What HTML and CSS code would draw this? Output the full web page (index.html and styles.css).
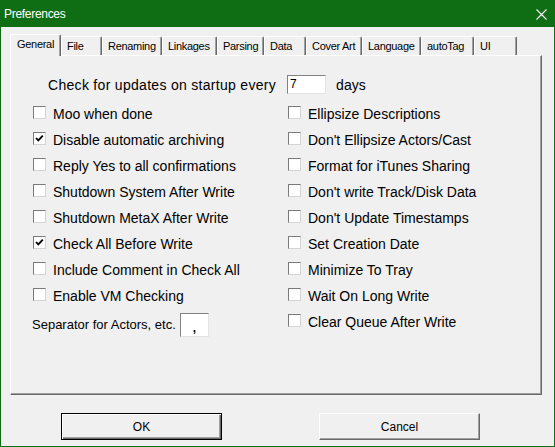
FILE: index.html
```html
<!DOCTYPE html>
<html lang="en">
<head>
    <meta charset="UTF-8">
    <title>Preferences</title>
    <link rel="stylesheet" href="styles.css">
</head>
<body>
    <div class="window">
        <!-- Title Bar -->
        <div class="titlebar">
            <span class="title">Preferences</span>
            <svg class="close" width="11" height="11" viewBox="0 0 11 11">
                <path d="M0.5 0.5 L10.5 10.5 M10.5 0.5 L0.5 10.5" stroke="#fff" stroke-width="1.1" fill="none"/>
            </svg>
        </div>

        <div class="client">
            <!-- Tabs -->
            <div class="tabs">
                <div class="tab selected w-general">General</div>
                <div class="tab w-file">File</div>
                <div class="tab w-renaming">Renaming</div>
                <div class="tab w-linkages">Linkages</div>
                <div class="tab w-parsing">Parsing</div>
                <div class="tab w-data">Data</div>
                <div class="tab w-cover">Cover Art</div>
                <div class="tab w-language">Language</div>
                <div class="tab w-autotag">autoTag</div>
                <div class="tab w-ui">UI</div>
            </div>

            <!-- General Panel -->
            <div class="panel">
                <div class="update-row">
                    <span class="update-label">Check for updates on startup every</span>
                    <span class="textbox days-box">7</span>
                    <span>days</span>
                </div>

                <div class="columns">
                    <div class="column">
                        <label class="check"><span class="box"></span>Moo when done</label>
                        <label class="check"><span class="box checked"></span>Disable automatic archiving</label>
                        <label class="check"><span class="box"></span>Reply Yes to all confirmations</label>
                        <label class="check"><span class="box"></span>Shutdown System After Write</label>
                        <label class="check"><span class="box"></span>Shutdown MetaX After Write</label>
                        <label class="check"><span class="box checked"></span>Check All Before Write</label>
                        <label class="check"><span class="box"></span>Include Comment in Check All</label>
                        <label class="check"><span class="box"></span>Enable VM Checking</label>
                        <div class="separator-row">
                            <span>Separator for Actors, etc.</span>
                            <span class="textbox sep-box">,</span>
                        </div>
                    </div>
                    <div class="column">
                        <label class="check"><span class="box"></span>Ellipsize Descriptions</label>
                        <label class="check"><span class="box"></span>Don't Ellipsize Actors/Cast</label>
                        <label class="check"><span class="box"></span>Format for iTunes Sharing</label>
                        <label class="check"><span class="box"></span>Don't write Track/Disk Data</label>
                        <label class="check"><span class="box"></span>Don't Update Timestamps</label>
                        <label class="check"><span class="box"></span>Set Creation Date</label>
                        <label class="check"><span class="box"></span>Minimize To Tray</label>
                        <label class="check"><span class="box"></span>Wait On Long Write</label>
                        <label class="check"><span class="box"></span>Clear Queue After Write</label>
                    </div>
                </div>
            </div>

            <!-- Buttons -->
            <div class="buttons">
                <div class="button default">OK</div>
                <div class="button">Cancel</div>
            </div>
        </div>
    </div>
</body>
</html>
```

FILE: styles.css
```css
/* General Reset */
* {
    margin: 0;
    padding: 0;
    box-sizing: border-box;
}

body {
    font-family: 'Liberation Sans', Arial, sans-serif;
    background-color: #f0f0f0;
    color: #000;
}

/* Window Frame */
.window {
    width: 555px;
    height: 447px;
    display: flex;
    flex-direction: column;
    border: 1px solid #0f6e14;
    border-top: none;
    background-color: #f0f0f0;
}

.titlebar {
    height: 27px;
    flex-shrink: 0;
    background-color: #0f6e14;
    color: #fff;
    display: flex;
    align-items: center;
    justify-content: space-between;
    padding: 0 8px 0 4px;
    margin: 0 -1px;
}

.title {
    font-size: 12px;
    letter-spacing: -0.3px;
    padding-top: 1px;
}

.close {
    display: block;
    margin-top: 2px;
}

.client {
    flex: 1;
    padding: 7px 0 0 9px;
}

/* Tabs */
.tabs {
    display: flex;
    height: 21px;
    align-items: flex-end;
}

.tab {
    height: 19px;
    font-size: 11px;
    letter-spacing: -0.3px;
    line-height: 18px;
    padding-left: 5px;
    border-top: 1px solid #fff;
    border-left: 1px solid #fff;
    border-right: 1px solid #696969;
    box-shadow: inset -1px 0 #a0a0a0;
    border-radius: 2px 2px 0 0;
}

.tab.selected {
    height: 22px;
    margin-bottom: -1px;
    padding-left: 6px;
    line-height: 19px;
    background-color: #f0f0f0;
    position: relative;
    z-index: 1;
}

.w-general { width: 51px; }
.w-file { width: 41px; }
.w-renaming { width: 60px; }
.w-linkages { width: 55px; }
.w-parsing { width: 47px; }
.w-data { width: 42px; }
.w-cover { width: 56px; }
.w-language { width: 59px; }
.w-autotag { width: 53px; }
.w-ui { width: 43px; }

/* Panel */
.panel {
    width: 532px;
    height: 340px;
    border-top: 1px solid #fff;
    border-left: 1px solid #fff;
    border-right: 1px solid #696969;
    border-bottom: 1px solid #696969;
    box-shadow: inset -1px -1px #a0a0a0;
    font-size: 14px;
}

.update-row {
    display: flex;
    align-items: center;
    height: 19px;
    margin-top: 19px;
    padding-left: 37px;
}

.update-label {
    letter-spacing: 0.3px;
}

.textbox {
    display: inline-block;
    background-color: #fff;
    border-top: 1px solid #828282;
    border-left: 1px solid #828282;
    border-right: 1px solid #e3e3e3;
    border-bottom: 1px solid #e3e3e3;
    font-size: 12px;
}

.days-box {
    width: 39px;
    height: 19px;
    margin: 0 10px 0 11px;
    padding-left: 2px;
    line-height: 17px;
}

.columns {
    display: grid;
    grid-template-columns: 255px 1fr;
    padding-left: 22px;
    margin-top: 7px;
}

.check {
    display: flex;
    align-items: center;
    height: 26px;
}

.box {
    width: 13px;
    height: 13px;
    margin-right: 7px;
    margin-top: -3px;
    background-color: #fff;
    border-top: 1px solid #7a7a7a;
    border-left: 1px solid #7a7a7a;
    border-right: 1px solid #d4d4d4;
    border-bottom: 1px solid #d4d4d4;
    flex-shrink: 0;
}

.box.checked {
    background: #fff url("data:image/svg+xml;utf8,<svg xmlns='http://www.w3.org/2000/svg' width='11' height='11' viewBox='0 0 11 11'><path d='M2 5 L4.3 7.4 L8.8 2.6' stroke='black' stroke-width='1.8' fill='none'/></svg>") no-repeat center;
}

.separator-row {
    display: flex;
    align-items: center;
    height: 31px;
    margin-left: -1px;
    gap: 4px;
    font-size: 13px;
}

.sep-box {
    width: 29px;
    height: 24px;
    text-align: center;
    line-height: 28px;
    font-size: 12px;
    font-weight: bold;
}

/* Buttons */
.buttons {
    display: flex;
    gap: 97px;
    margin-top: 18px;
    padding-left: 51px;
}

.button {
    width: 161px;
    height: 27px;
    font-size: 12px;
    display: flex;
    align-items: center;
    justify-content: center;
    border-top: 1px solid #fff;
    border-left: 1px solid #fff;
    border-right: 1px solid #696969;
    border-bottom: 1px solid #696969;
    box-shadow: inset -1px -1px #a0a0a0;
}

.button.default {
    border: 1px solid #000;
    box-shadow: inset 1px 1px #fff, inset -1px -1px #696969, inset -2px -2px #a0a0a0;
}
```
